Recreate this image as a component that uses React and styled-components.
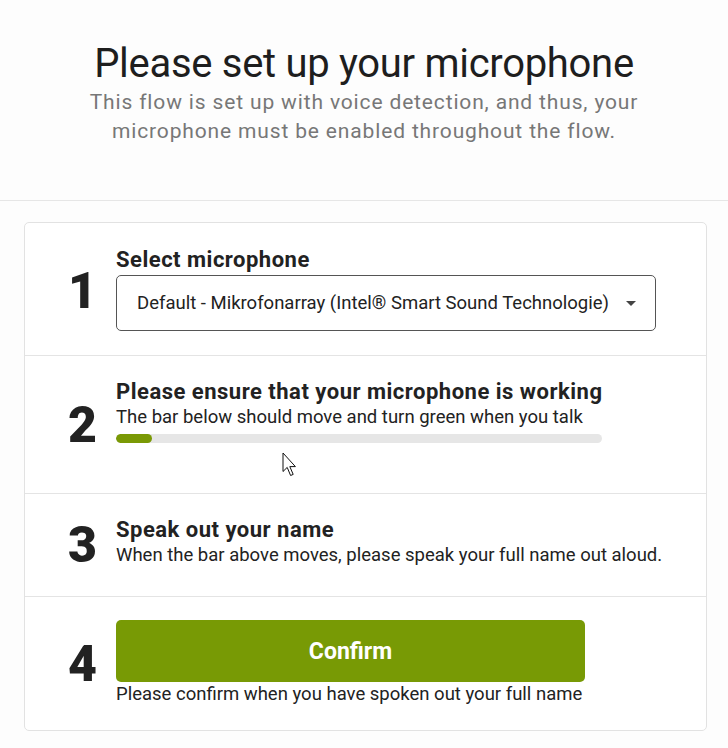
import styled, { createGlobalStyle } from "styled-components";

const GlobalStyle = createGlobalStyle`
  body {
    margin: 0;
    background: #fdfdfd;
    font-family: Roboto, "Noto Sans", sans-serif;
    color: #222;
  }
`;

const Header = styled.header`
  padding: 40px 20px 0;
  height: 160px;
  text-align: center;
  border-bottom: 1px solid #e6e6e6;
`;

const Title = styled.h1`
  margin: 0;
  font-size: 40px;
  line-height: 48px;
  font-weight: 400;
  color: #1e1e1e;
  letter-spacing: -0.3px;
`;

const Subtitle = styled.p`
  margin: 0 auto;
  max-width: 590px;
  font-size: 21px;
  line-height: 29px;
  letter-spacing: 0.85px;
  color: #777;
`;

const Card = styled.section`
  margin: 21px 21px 0 24px;
  background: #fff;
  border: 1px solid #e2e2e2;
  border-radius: 5px;
`;

const Step = styled.div`
  position: relative;
  display: grid;
  grid-template-columns: 91px 1fr;
  align-items: center;
  height: ${(p) => p.$height}px;
  box-sizing: border-box;
  padding-top: ${(p) => p.$top}px;
  & + & {
    border-top: 1px solid #e4e4e4;
  }
`;

const Number = styled.div`
  padding-left: 43px;
  font-size: 50px;
  line-height: 1;
  font-weight: 900;
  color: #222;
  align-self: center;
  margin-top: ${(p) => p.$shift || 0}px;
`;

const Body = styled.div`
  align-self: start;
  display: flex;
  flex-direction: column;
`;

const StepTitle = styled.div`
  font-size: 22px;
  line-height: 26px;
  font-weight: 700;
  letter-spacing: 0.5px;
  color: #222;
`;

const StepText = styled.div`
  font-size: 18.5px;
  line-height: 25px;
  color: #222;
`;

const SelectBox = styled.div`
  display: flex;
  align-items: center;
  justify-content: space-between;
  width: 540px;
  height: 56px;
  margin-top: 2px;
  padding: 0 19px 0 20px;
  box-sizing: border-box;
  border: 1px solid #555;
  border-radius: 5px;
  font-size: 18.5px;
  color: #222;
`;

const Caret = styled.span`
  width: 0;
  height: 0;
  border-left: 5px solid transparent;
  border-right: 5px solid transparent;
  border-top: 5px solid #444;
`;

const Meter = styled.div`
  width: 486px;
  height: 9px;
  margin-top: 4px;
  background: #e6e6e6;
  border-radius: 5px;
  overflow: hidden;
`;

const MeterFill = styled.div`
  height: 100%;
  background: #7a9905;
  border-radius: 5px;
`;

const ConfirmButton = styled.button`
  width: 469px;
  height: 62px;
  border: 0;
  border-radius: 5px;
  background: #789a05;
  color: #fff;
  font-family: inherit;
  font-size: 23px;
  font-weight: 700;
  cursor: pointer;
`;

const Pointer = styled.svg`
  position: absolute;
  left: 257px;
  top: 96px;
`;

export default function App() {
  const level = 36;
  return (
    <>
      <GlobalStyle />
      <Header>
        <Title>Please set up your microphone</Title>
        <Subtitle>
          This flow is set up with voice detection, and thus, your microphone
          must be enabled throughout the flow.
        </Subtitle>
      </Header>
      <Card>
        <Step $height={132} $top={24}>
          <Number $shift={-20}>1</Number>
          <Body>
            <StepTitle>Select microphone</StepTitle>
            <SelectBox>
              <span>Default - Mikrofonarray (Intel® Smart Sound Technologie)</span>
              <Caret />
            </SelectBox>
          </Body>
        </Step>
        <Step $height={138} $top={23}>
          <Number $shift={-23}>2</Number>
          <Body>
            <StepTitle>Please ensure that your microphone is working</StepTitle>
            <StepText>The bar below should move and turn green when you talk</StepText>
            <Meter>
              <MeterFill style={{ width: level }} />
            </Meter>
          </Body>
          <Pointer width="15" height="26" viewBox="0 0 15 26">
            <path
              d="M1 1 L1 19.5 L5.2 15.4 L8.6 23.5 L11.2 22.4 L7.8 14.6 L13.4 14.6 Z"
              fill="#fff"
              stroke="#111"
              strokeWidth="1"
              strokeLinejoin="round"
            />
          </Pointer>
        </Step>
        <Step $height={103} $top={23}>
          <Number $shift={-23}>3</Number>
          <Body>
            <StepTitle>Speak out your name</StepTitle>
            <StepText>When the bar above moves, please speak your full name out aloud.</StepText>
          </Body>
        </Step>
        <Step $height={134} $top={23}>
          <Number $shift={-23}>4</Number>
          <Body>
            <ConfirmButton>Confirm</ConfirmButton>
            <StepText>Please confirm when you have spoken out your full name</StepText>
          </Body>
        </Step>
      </Card>
    </>
  );
}
